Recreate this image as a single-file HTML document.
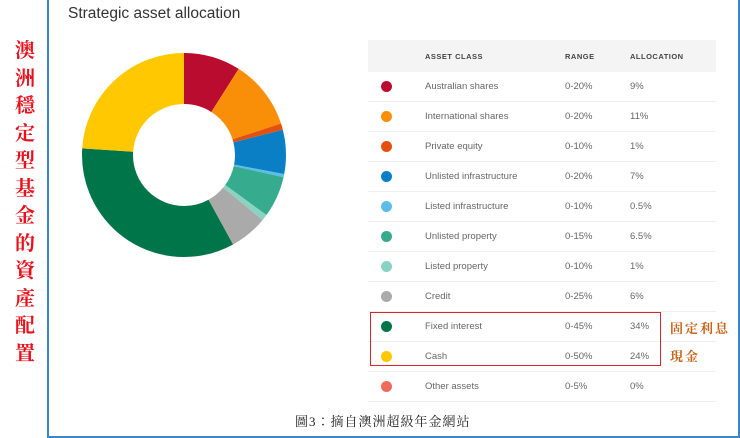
<!DOCTYPE html>
<html><head><meta charset="utf-8"><style>
body{margin:0;width:740px;height:438px;background:#fff;position:relative;overflow:hidden;font-family:"Liberation Sans",sans-serif}
.frame{position:absolute;left:47px;top:-2px;width:689px;height:436px;border:2px solid #3a86c8}
.vt{position:absolute;left:12px;top:38px;width:26px;color:#e8101a;font-family:"Liberation Serif","Noto Serif CJK SC",serif;font-weight:bold;font-size:20px;line-height:27.5px;text-align:center}
.title{position:absolute;left:68px;top:5px;font-size:15.5px;color:#333}
table{position:absolute;left:368px;top:40px;width:348px;border-collapse:collapse;font-size:9.5px;color:#666;table-layout:fixed}
th,td{padding:0}
th{background:#f4f4f4;height:32px;text-align:left;font-weight:bold;font-size:7.5px;letter-spacing:.5px;color:#444}
td{height:29px;border-bottom:1px solid #eee}
.d{display:inline-block;width:11px;height:11px;border-radius:50%;margin-left:13px;vertical-align:middle}
.box{position:absolute;left:370px;top:312px;width:289px;height:52px;border:1.5px solid #d8262c}
.lab{position:absolute;left:670px;color:#c8641a;font-family:"Liberation Serif","Noto Serif CJK SC",serif;font-weight:bold;font-size:13px;letter-spacing:2px}
.cap{position:absolute;left:295px;top:411px;font-family:"Liberation Serif","Noto Serif CJK TC",serif;font-size:13px;color:#222;letter-spacing:1px}
</style></head><body>
<div class="frame"></div>
<div class="vt">澳<br>洲<br>穩<br>定<br>型<br>基<br>金<br>的<br>資<br>產<br>配<br>置</div>
<div class="title">Strategic asset allocation</div>
<svg style="position:absolute;left:0;top:0" width="740" height="438">
<g transform="translate(184,155) rotate(-90)" fill="none" stroke-width="51">
<circle r="76.5" stroke="#ba0c2f" stroke-dasharray="43.26 500" stroke-dashoffset="0"/>
<circle r="76.5" stroke="#f98e09" stroke-dasharray="52.87 500" stroke-dashoffset="-43.26"/>
<circle r="76.5" stroke="#e4510f" stroke-dasharray="4.81 500" stroke-dashoffset="-96.13"/>
<circle r="76.5" stroke="#0a7fc5" stroke-dasharray="33.65 500" stroke-dashoffset="-100.94"/>
<circle r="76.5" stroke="#5bbde8" stroke-dasharray="2.4 500" stroke-dashoffset="-134.59"/>
<circle r="76.5" stroke="#36ab8e" stroke-dasharray="31.24 500" stroke-dashoffset="-136.99"/>
<circle r="76.5" stroke="#8ad3c2" stroke-dasharray="4.81 500" stroke-dashoffset="-168.23"/>
<circle r="76.5" stroke="#aaaaaa" stroke-dasharray="28.84 500" stroke-dashoffset="-173.04"/>
<circle r="76.5" stroke="#00754a" stroke-dasharray="163.42 500" stroke-dashoffset="-201.88"/>
<circle r="76.5" stroke="#ffc800" stroke-dasharray="115.36 500" stroke-dashoffset="-365.3"/>
</g></svg>
<table>
<tr><th style="width:57px"></th><th style="width:140px">ASSET CLASS</th><th style="width:65px">RANGE</th><th>ALLOCATION</th></tr>
<tr><td><span class="d" style="background:#ba0c2f"></span></td><td>Australian shares</td><td>0-20%</td><td>9%</td></tr>
<tr><td><span class="d" style="background:#f98e09"></span></td><td>International shares</td><td>0-20%</td><td>11%</td></tr>
<tr><td><span class="d" style="background:#e4510f"></span></td><td>Private equity</td><td>0-10%</td><td>1%</td></tr>
<tr><td><span class="d" style="background:#0a7fc5"></span></td><td>Unlisted infrastructure</td><td>0-20%</td><td>7%</td></tr>
<tr><td><span class="d" style="background:#5bbde8"></span></td><td>Listed infrastructure</td><td>0-10%</td><td>0.5%</td></tr>
<tr><td><span class="d" style="background:#36ab8e"></span></td><td>Unlisted property</td><td>0-15%</td><td>6.5%</td></tr>
<tr><td><span class="d" style="background:#8ad3c2"></span></td><td>Listed property</td><td>0-10%</td><td>1%</td></tr>
<tr><td><span class="d" style="background:#aaaaaa"></span></td><td>Credit</td><td>0-25%</td><td>6%</td></tr>
<tr><td><span class="d" style="background:#00754a"></span></td><td>Fixed interest</td><td>0-45%</td><td>34%</td></tr>
<tr><td><span class="d" style="background:#ffc800"></span></td><td>Cash</td><td>0-50%</td><td>24%</td></tr>
<tr><td><span class="d" style="background:#ee6b5b"></span></td><td>Other assets</td><td>0-5%</td><td>0%</td></tr>
</table>
<div class="box"></div>
<div class="lab" style="top:318px">固定利息</div>
<div class="lab" style="top:346px">現金</div>
<div class="cap">圖3：摘自澳洲超級年金網站</div>
</body></html>
